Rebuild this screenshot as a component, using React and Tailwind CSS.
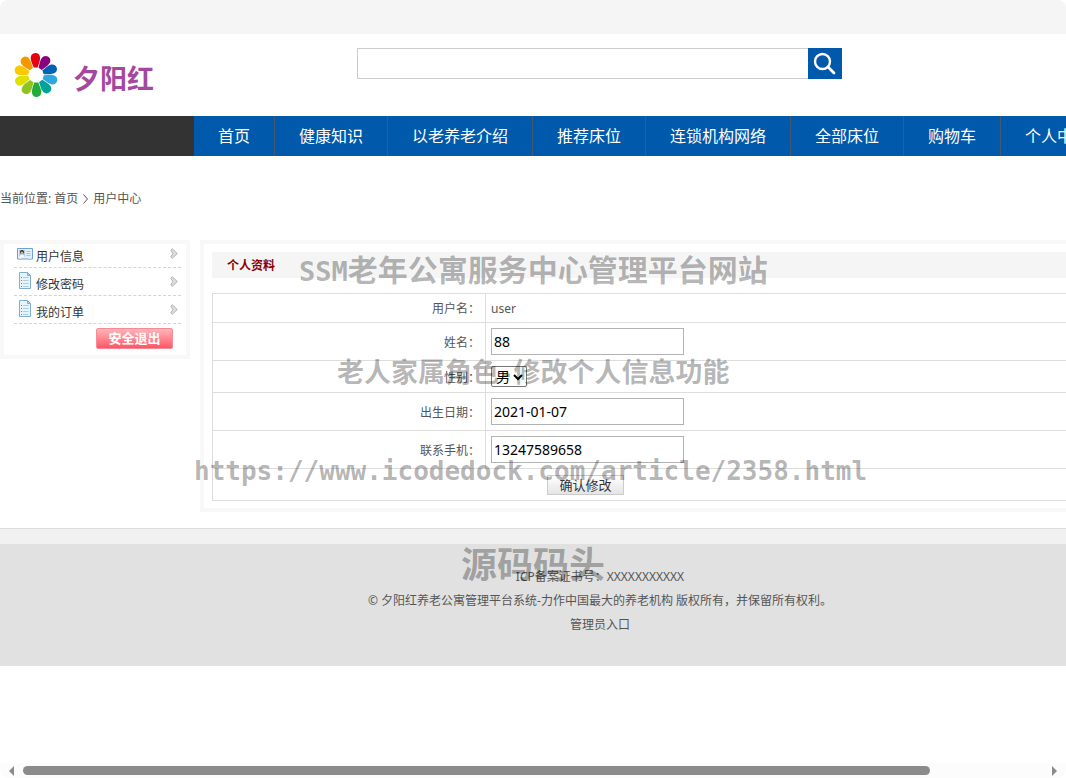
import { useState } from 'react'

const NAV = ['首页', '健康知识', '以老养老介绍', '推荐床位', '连锁机构网络', '全部床位', '购物车', '个人中心']

const PETALS = ['#e60012', '#8b0081', '#0062b1', '#2ea7e0', '#00a29a', '#22ac38', '#8fc31f', '#dfe000', '#fcc800', '#f39800']

// ── Icons ─────────────────────────────────────────────────────────────────────
const FlowerLogo = () => (
  <svg width="46" height="46" viewBox="-23 -23 46 46" aria-hidden="true">
    {PETALS.map((color, i) => (
      <path key={color} fill={color} transform={`rotate(${i * 36 - 2})`}
        d="M-2 -7.5C-3 -10.500 -4.700 -14 -4.700 -17C-4.700 -20 -2.800 -22 0 -22C2.800 -22 4.700 -20 4.700 -17C4.700 -14 3 -10.500 2 -7.500Z"/>
    ))}
  </svg>
)
const SearchIcon = () => (
  <svg width="24" height="24" viewBox="0 0 24 24" fill="none" stroke="#fff" strokeLinecap="round" aria-hidden="true">
    <circle cx="9.500" cy="9.500" r="7.500" strokeWidth="2.400"/><path d="M15.300 15.300L21 21" strokeWidth="2.800"/>
  </svg>
)
const CardIcon = () => (
  <svg width="16" height="14" viewBox="0 0 16 14" aria-hidden="true">
    <path d="M.5 1.500h15v10.500h-2l-1 1-1-1h-7l-1 1-1-1h-2z" fill="#e4f1fc" stroke="#6ea3d3"/>
    <rect x="2" y="3" width="6" height="7" fill="#a9cdea"/>
    <circle cx="5" cy="5" r="2" fill="#33291f"/><circle cx="5" cy="5.700" r="1.200" fill="#f3b46b"/>
    <path d="M2.500 10c0-3 5-3 5 0z" fill="#fff"/>
    <path d="M9.500 4.500h4M9.500 6.500h4M9.500 8.500h4" stroke="#9cc4e6"/>
  </svg>
)
const DocIcon = () => (
  <svg width="14" height="17" viewBox="0 0 14 17" aria-hidden="true">
    <path d="M1.500.5h8l3 3v13h-11z" fill="#e8f4fc" stroke="#7fadd0"/>
    <path d="M9.500.5v3h3z" fill="#b8d7ec" stroke="#7fadd0"/>
    <path d="M5 5.500h5.500M5 8.500h5.500M5 11.500h5.500M5 14.500h5.500" stroke="#a9cde4"/>
    <path d="M3 5.500h1M3 8.500h1M3 11.500h1M3 14.500h1" stroke="#4a9b76"/>
  </svg>
)
const ArrowIcon = () => (
  <svg width="8" height="11" viewBox="0 0 8 11" aria-hidden="true">
    <path d="M.8 2L2.300.7 7.300 5.500 2.300 10.300.8 9 2.800 5.500z" fill="#dedede" stroke="#adadad" strokeWidth=".9"/>
  </svg>
)
const ChevronDown = () => (
  <svg width="10" height="7" viewBox="0 0 10 7" fill="none" stroke="#000" strokeWidth="2" aria-hidden="true">
    <path d="M1 1l4 4 4-4"/>
  </svg>
)

const MENU = [
  { text: '用户信息', icon: <CardIcon/>, height: 'h-6', iconBox: 'pt-1' },
  { text: '修改密码', icon: <DocIcon/>, height: 'h-7', iconBox: 'pt-px pl-px' },
  { text: '我的订单', icon: <DocIcon/>, height: 'h-7', iconBox: 'pt-px pl-px' },
]

// ── Header ────────────────────────────────────────────────────────────────────
function Header() {
  return (
    <header>
      <div className="h-[34px] bg-[#f5f5f5]"/>
      <div className="flex h-[82px] items-start">
        <a href="#home" className="flex w-[357px] items-center pt-[18px] pl-[13px]">
          <FlowerLogo/>
          <span className="pt-2 pl-[14px] text-[27px] leading-9 font-bold text-[#a3479f]">夕阳红</span>
        </a>
        <form className="mt-[14px] flex h-[31px] w-[485px]" onSubmit={e => e.preventDefault()}>
          <input type="search" aria-label="搜索" className="min-w-0 flex-1 border border-r-0 border-[#ccc] px-2 text-sm outline-none"/>
          <button aria-label="提交搜索" className="flex w-[34px] items-center justify-center bg-[#0059aa]"><SearchIcon/></button>
        </form>
      </div>
      <nav className="flex h-10 bg-[#0059aa]">
        <div className="w-[194px] shrink-0 bg-[#333]"/>
        {NAV.map(item => (
          <a key={item} href="#nav" className="shrink-0 border-r border-[#45596e] px-6 text-base leading-10 text-white">{item}</a>
        ))}
      </nav>
    </header>
  )
}

// ── Sidebar ───────────────────────────────────────────────────────────────────
function Sidebar() {
  return (
    <aside className="h-[119px] w-[190px] shrink-0 border-4 border-[#f8f8f8] pr-[5px] pl-[10px]">
      <ul>
        {MENU.map(({ text, icon, height, iconBox }) => (
          <li key={text} className={`flex items-end border-b border-dashed border-[#d4d4d4] ${height}`}>
            <a href="#menu" className="flex h-6 w-full items-start px-[3px] text-xs text-[#333]">
              <span className={`w-[19px] ${iconBox}`}>{icon}</span>
              <span className="flex-1 pt-0.5 leading-6">{text}</span>
              <span className="pt-[5px]"><ArrowIcon/></span>
            </a>
          </li>
        ))}
      </ul>
      <div className="flex justify-end pt-1 pr-2">
        <button className="h-[21px] w-[77px] rounded-xs border border-[#f88a96] bg-linear-to-b from-[#ffb3ba] to-[#fc5467] text-[13px] leading-[19px] font-bold text-white">安全退出</button>
      </div>
    </aside>
  )
}

// ── Profile form ──────────────────────────────────────────────────────────────
function Row({ label, id, height, children }) {
  return (
    <tr className={height}>
      <th className="w-[28%] border border-[#ddd] pt-0.5 pr-[5px] text-right font-normal">
        {id ? <label htmlFor={id}>{label}：</label> : <>{label}：</>}
      </th>
      <td className="border border-[#ddd] pl-[5px]">{children}</td>
    </tr>
  )
}

function TextBox({ id, value, onChange }) {
  return (
    <input id={id} value={value} onChange={e => onChange(e.target.value)}
      className="block h-[27px] w-[193px] border border-[#b3b3b3] px-0.5 text-sm text-black"/>
  )
}

function Profile() {
  const [name, setName] = useState('88')
  const [birthday, setBirthday] = useState('2021-01-07')
  const [phone, setPhone] = useState('13247589658')

  return (
    <main className="min-w-0 flex-1 border-4 border-[#f8f8f8] p-2 pb-[7px]">
      <h1 className="mb-[15px] h-[26px] bg-[#f5f5f5] pl-[15px] text-xs leading-7 font-bold text-[#8b0000]">个人资料</h1>
      <form onSubmit={e => e.preventDefault()}>
        <table className="w-full table-fixed border-collapse text-xs text-[#555]">
          <tbody>
            <Row label="用户名" height="h-[29px]"><p className="pt-0.5">user</p></Row>
            <Row label="姓名" id="name" height="h-[38px]"><TextBox id="name" value={name} onChange={setName}/></Row>
            <Row label="性别" id="sex" height="h-8">
              <div className="relative w-9">
                <select id="sex" className="block h-[21px] w-full appearance-none rounded-xs border border-[#767676] bg-white pl-1 text-sm leading-[19px] text-black">
                  <option>男</option>
                  <option>女</option>
                </select>
                <span className="pointer-events-none absolute top-2 right-1"><ChevronDown/></span>
              </div>
            </Row>
            <Row label="出生日期" id="birthday" height="h-[38px]"><TextBox id="birthday" value={birthday} onChange={setBirthday}/></Row>
            <Row label="联系手机" id="phone" height="h-[38px]"><TextBox id="phone" value={phone} onChange={setPhone}/></Row>
            <tr className="h-8">
              <td colSpan={2} className="border border-[#ddd] pl-[334px]">
                <button className="block h-5 w-[77px] border border-[#ccc] bg-linear-to-b from-white to-[#e4e4e4] text-[13px] leading-[18px] text-[#333]">确认修改</button>
              </td>
            </tr>
          </tbody>
        </table>
      </form>
    </main>
  )
}

// ── Watermarks over the page ──────────────────────────────────────────────────
function Watermarks() {
  return (
    <div className="pointer-events-none absolute inset-0 font-bold whitespace-nowrap text-black/30">
      <p className="absolute top-[250px] left-[299px] text-[30px] leading-10">
        <span className="font-['DejaVu_Sans_Mono',monospace] text-[27px]">SSM</span>老年公寓服务中心管理平台网站
      </p>
      <p className="absolute top-[352px] left-[337px] text-[27px] leading-10">
        老人家属角色<span className="font-['DejaVu_Sans_Mono',monospace] text-2xl">-</span>修改个人信息功能
      </p>
      <p className="absolute top-[451px] left-[194px] font-['DejaVu_Sans_Mono',monospace] text-[26px] leading-10">
        https://www.icodedock.com/article/2358.html
      </p>
      <p className="absolute top-[545px] left-[461px] text-4xl leading-10">源码码头</p>
    </div>
  )
}

function Footer() {
  return (
    <footer className="mt-4 border-t border-[#ddd] text-center text-xs leading-6 text-[#555]">
      <div className="h-[15px] bg-[#f1f1f1]"/>
      <div className="h-[122px] bg-[#e1e1e1] pt-[21px]">
        <p>ICP备案证书号：XXXXXXXXXXX</p>
        <p>© 夕阳红养老公寓管理平台系统-力作中国最大的养老机构 版权所有，并保留所有权利。</p>
        <a href="#admin">管理员入口</a>
      </div>
    </footer>
  )
}

function ScrollBar() {
  return (
    <div className="flex h-[15px] shrink-0 items-center bg-[#fcfcfc] px-[9px]" aria-hidden="true">
      <svg width="5" height="10" viewBox="0 0 5 10" fill="#8b8b8b"><path d="M5 0v10L0 5z"/></svg>
      <div className="mx-[9px] flex-1">
        <div className="h-[9px] w-8/9 rounded-full bg-[#8b8b8b]"/>
      </div>
      <svg width="5" height="10" viewBox="0 0 5 10" fill="#8b8b8b"><path d="M0 0v10l5-5z"/></svg>
    </div>
  )
}

export default function App() {
  return (
    <div className="flex h-screen flex-col overflow-hidden rounded-lg bg-white font-['Noto_Sans','Noto_Sans_CJK_SC',sans-serif]" lang="zh-CN">
      <div className="min-h-0 flex-1 overflow-hidden">
        <div className="relative min-w-[1200px]">
          <Header/>
          <div className="flex h-[84px] items-center gap-[5px] pt-0.5 text-xs text-[#555]">
            <span>当前位置: <a href="#home">首页</a></span>
            <svg width="5" height="10" viewBox="0 0 5 10" fill="none" stroke="#555" aria-hidden="true"><path d="M.5.5L4.500 5 .5 9.500"/></svg>
            <span>用户中心</span>
          </div>
          <div className="flex items-start gap-[10px]">
            <Sidebar/>
            <Profile/>
          </div>
          <Footer/>
          <Watermarks/>
        </div>
      </div>
      <ScrollBar/>
    </div>
  )
}
